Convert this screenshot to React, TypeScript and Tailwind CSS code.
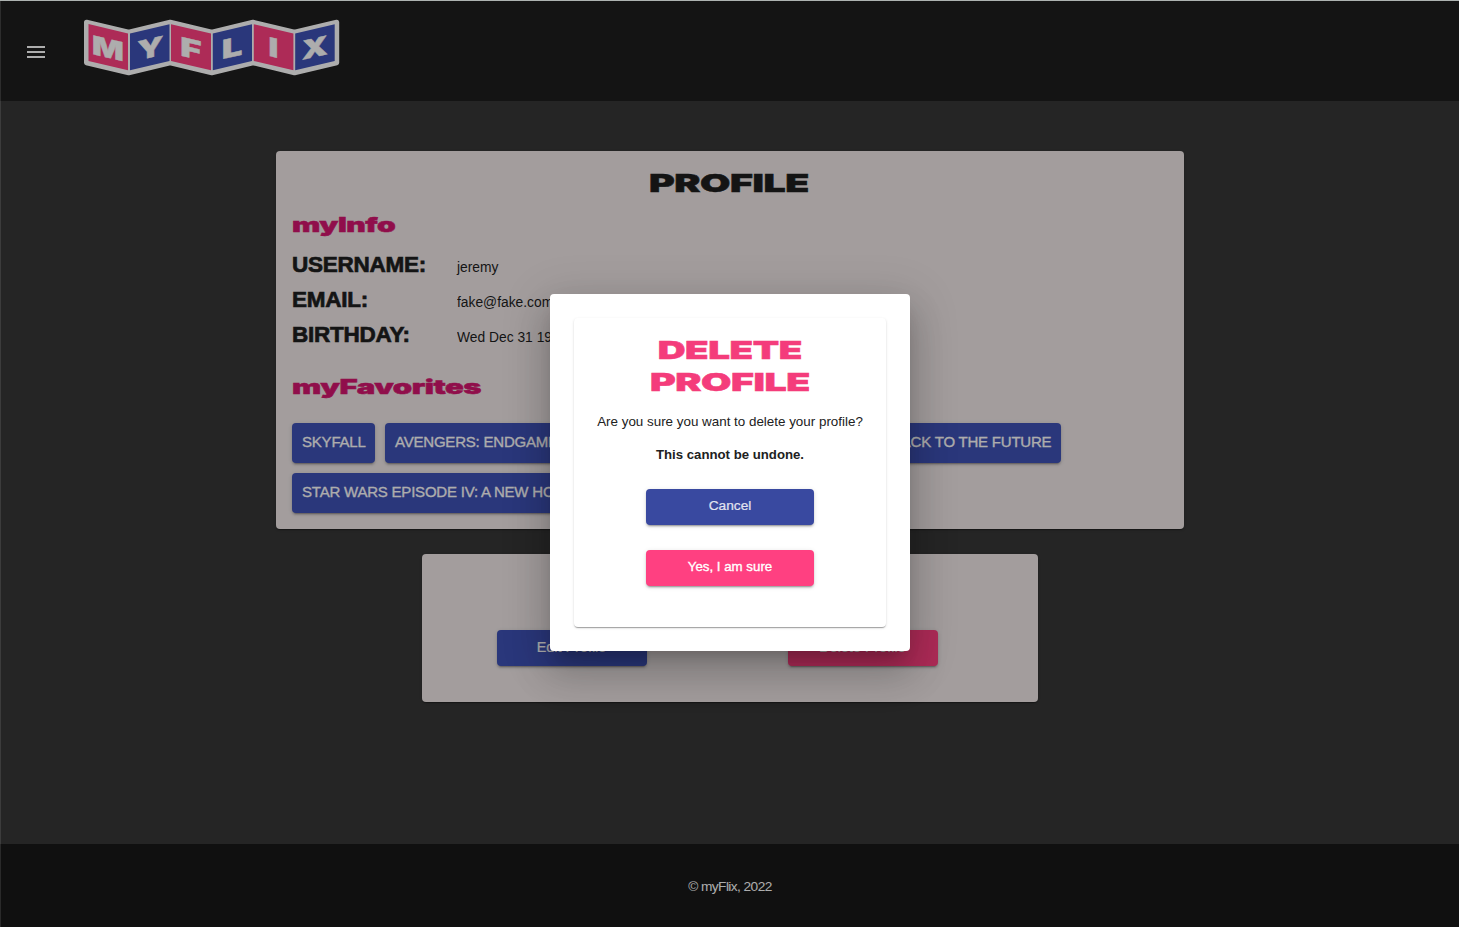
import type { ReactNode } from "react";

const raised =
  "shadow-[0_3px_1px_-2px_rgba(0,0,0,0.2),0_2px_2px_rgba(0,0,0,0.14),0_1px_5px_rgba(0,0,0,0.12)]";
const cardShadow =
  "shadow-[0_2px_1px_-1px_rgba(0,0,0,0.2),0_1px_1px_rgba(0,0,0,0.14),0_1px_3px_rgba(0,0,0,0.12)]";
const wide =
  "inline-block font-['Inter',sans-serif] tracking-[-0.3px] [-webkit-text-stroke:0.5px_currentColor]";

const panels = [
  { letter: "M", points: "88.5,24 128,33.4 128,70.3 88.5,61", fill: "#ff4081", x: 108, y: 57.6, sx: 1.28, slope: 0.23 },
  { letter: "Y", points: "130,33.4 169.5,24.2 169.5,61 130,70.3", fill: "#3f51b5", x: 150.3, y: 57.6, sx: 1.3, slope: -0.23 },
  { letter: "F", points: "171,24.2 211,33.4 211,70.3 171,61", fill: "#ff4081", x: 190.8, y: 58, sx: 1.4, slope: 0.23 },
  { letter: "L", points: "212.8,33.4 252,24.2 252,61 212.8,70.3", fill: "#3f51b5", x: 232, y: 57, sx: 1.4, slope: -0.23 },
  { letter: "I", points: "253.8,24.2 293.4,33.4 293.4,70.3 253.8,61", fill: "#ff4081", x: 273.3, y: 57, sx: 1.3, slope: 0.23 },
  { letter: "X", points: "295.2,33.4 334.7,24.2 334.7,61 295.2,70.3", fill: "#3f51b5", x: 314.9, y: 56.9, sx: 1.28, slope: -0.23 },
];

function Logo() {
  return (
    <svg width="257" height="57" viewBox="83 19 257 57" className="block">
      <path
        d="M86.5 22.3 128.7 32.2 170.2 22.3 211.8 32.2 253 22.3 294.5 32.2 336.7 22.3V62.7L294.5 72.7 253 62.7 211.8 72.7 170.2 62.7 128.7 72.7 86.5 62.7Z"
        fill="#fff"
        stroke="#fff"
        strokeWidth="5"
        strokeLinejoin="round"
      />
      {panels.map((p) => (
        <g key={p.letter}>
          <polygon points={p.points} fill={p.fill} />
          <text
            transform={`matrix(${p.sx} ${p.slope * p.sx} 0 1 ${p.x} ${p.y})`}
            textAnchor="middle"
            fill="#fff"
            stroke="#fff"
            strokeWidth="0.4"
            fontSize="26"
            fontWeight="900"
            fontFamily="Inter, sans-serif"
          >
            {p.letter}
          </text>
        </g>
      ))}
    </svg>
  );
}

function InfoRow({ label, value }: { label: string; value: string }) {
  return (
    <div className="flex h-[35px] items-center">
      <div className="w-[165px]">
        <span className="block pl-[0.5px] text-[22.5px] leading-[34px] font-bold tracking-[-0.24px] [-webkit-text-stroke:0.7px_#1e1e1e]">
          {label}
        </span>
      </div>
      <span className="inline-block origin-left scale-x-[0.91] pt-[5px] text-[15.2px] whitespace-nowrap">{value}</span>
    </div>
  );
}

function Movie({ className, children }: { className: string; children: ReactNode }) {
  return (
    <button
      className={`h-10 shrink-0 rounded bg-[#3f51b5] pb-0.5 text-left text-[15px] tracking-[-0.21px] whitespace-nowrap text-white [-webkit-text-stroke:0.3px_#fff] ${raised} ${className}`}
    >
      {children}
    </button>
  );
}

export default function App() {
  return (
    <div className="relative flex h-[927px] w-[1459px] flex-col overflow-hidden border-t border-[#adb3b1] bg-[#373737] font-['Liberation_Sans',Arial,sans-serif] text-[#1e1e1e]">
      <header className="flex h-[100px] shrink-0 items-start bg-[#1e1e1e]">
        <button className="mt-[45px] ml-[27px] flex w-[18px] flex-col gap-[3px]" aria-label="Menu">
          <span className="h-0.5 w-full bg-white" />
          <span className="h-0.5 w-full bg-white" />
          <span className="h-0.5 w-full bg-white" />
        </button>
        <div className="mt-[18px] ml-[38px]">
          <Logo />
        </div>
      </header>

      <main className="flex grow flex-col items-center pt-[50px]">
        <section className={`flex h-[378px] w-[908px] flex-col rounded bg-[#f0e8e8] px-4 pt-4 ${cardShadow}`}>
          <h1 className="pr-px text-center text-[25px] leading-8 font-black">
            <span className={`${wide} scale-x-[1.57]`}>PROFILE</span>
          </h1>
          <h2 className="mt-[10px] text-[20px] leading-8 font-black text-[#d5166f]">
            <span className={`${wide} origin-left scale-x-[1.5]`}>myInfo</span>
          </h2>
          <div className="mt-[6px]">
            <InfoRow label="USERNAME:" value="jeremy" />
            <InfoRow label="EMAIL:" value="fake@fake.com" />
            <InfoRow label="BIRTHDAY:" value="Wed Dec 31 1969" />
          </div>
          <h2 className="mt-[19px] text-[20px] leading-8 font-black text-[#d5166f]">
            <span className={`${wide} origin-left scale-x-[1.55]`}>myFavorites</span>
          </h2>
          <div className="mt-5 flex gap-2.5">
            <Movie className="w-[83px] pl-[10.5px]">SKYFALL</Movie>
            <Movie className="w-[182px] pl-[10.5px]">AVENGERS: ENDGAME</Movie>
            <Movie className="ml-[303px] w-[181px] pl-[11.5px]">BACK TO THE FUTURE</Movie>
          </div>
          <div className="mt-2.5 flex">
            <Movie className="w-[290px] pl-[10.5px]">STAR WARS EPISODE IV: A NEW HOPE</Movie>
          </div>
        </section>

        <section
          className={`mt-[25px] flex h-[148px] w-[616px] items-start justify-between rounded bg-[#f0e8e8] pt-[76px] pr-[100px] pl-[75px] text-[14.4px] text-white [-webkit-text-stroke:0.2px_#fff] ${cardShadow}`}
        >
          <button className={`h-9 w-[150px] rounded bg-[#3f51b5] ${raised}`}>Edit Profile</button>
          <button className={`h-9 w-[150px] rounded bg-[#ff4081] ${raised}`}>Delete Profile</button>
        </section>
      </main>

      <footer className="flex h-[83px] shrink-0 items-center justify-center bg-[#181818] pt-[3px] pl-px text-[13.7px] tracking-[-0.57px] text-white">
        © myFlix, 2022
      </footer>

      <div className="absolute inset-0 border-l border-[#ffffff1c] bg-black/32 pt-[293px] pl-[549px]">
        <div
          role="dialog"
          className="h-[357px] w-[360px] rounded bg-white p-6 shadow-[0_11px_15px_-7px_rgba(0,0,0,0.2),0_24px_38px_3px_rgba(0,0,0,0.14),0_9px_46px_8px_rgba(0,0,0,0.12)]"
        >
          <div className={`flex h-[309px] flex-col items-center rounded bg-white pt-4 text-[#212121] ${cardShadow}`}>
            <h2 className="flex flex-col items-center pr-px text-[25px] leading-8 font-black text-[#f43c7b]">
              <span className={`${wide} scale-x-[1.54]`}>DELETE</span>
              <span className={`${wide} scale-x-[1.57]`}>PROFILE</span>
            </h2>
            <p className="mt-[14px] text-[13.4px] leading-5">Are you sure you want to delete your profile?</p>
            <p className="mt-[13px] text-[13.2px] leading-5 font-bold">This cannot be undone.</p>
            <button className={`mt-[24px] h-9 w-[168px] rounded bg-[#3949a0] pb-[1px] text-[13.7px] text-[#e2e4f0] [-webkit-text-stroke:0.2px_#e2e4f0] ${raised}`}>
              Cancel
            </button>
            <button className={`mt-[25px] h-9 w-[168px] rounded bg-[#ff4081] pb-[3px] text-[13.3px] text-white [-webkit-text-stroke:0.35px_#fff] ${raised}`}>
              Yes, I am sure
            </button>
          </div>
        </div>
      </div>
    </div>
  );
}
